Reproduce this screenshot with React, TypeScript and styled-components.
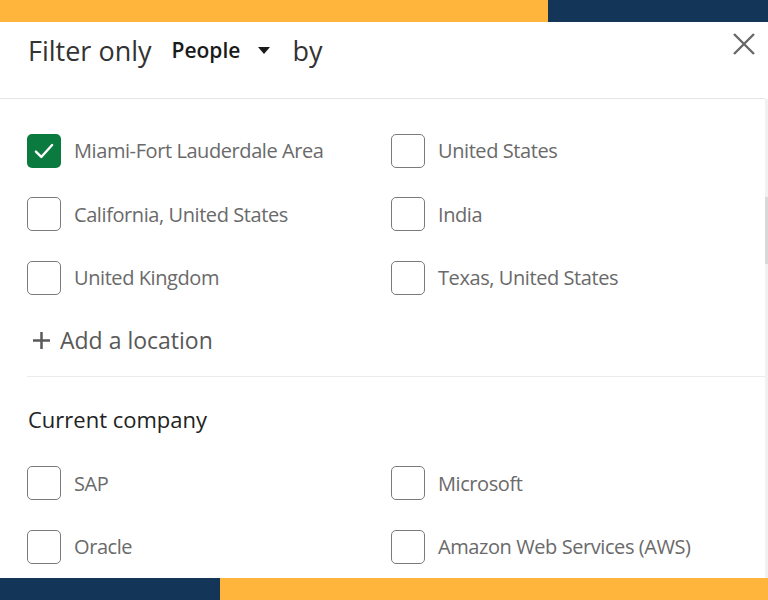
import * as React from "react"
import styled, { createGlobalStyle } from "styled-components"

const ORANGE = "#ffb43c"
const NAVY = "#133557"

const GlobalStyle = createGlobalStyle`
    html, body {
        margin: 0;
        padding: 0;
        background: #ffffff;
    }
    body {
        font-family: "Open Sans", "Noto Sans", sans-serif;
        overflow: hidden;
    }
`

const Page = styled.div`
    width: 768px;
    height: 600px;
    display: flex;
    flex-direction: column;
    background: #ffffff;
`

const Stripe = styled.div<{ $split: number; $left: string; $right: string }>`
    height: 22px;
    flex: 0 0 auto;
    display: grid;
    grid-template-columns: ${p => p.$split}px 1fr;
    background: ${p => p.$right};

    &::before {
        content: "";
        background: ${p => p.$left};
    }
`

const Header = styled.div`
    height: 77px;
    flex: 0 0 auto;
    display: flex;
    align-items: center;
    padding: 0 10px 0 28px;
    margin-right: 3px;
    border-bottom: 1px solid #e6e6e6;
    box-sizing: border-box;
    color: #333333;
`

const Title = styled.div`
    flex: 1 1 auto;
    display: flex;
    align-items: center;
    font-size: 27px;
    transform: translateY(-10px);
`

const EntityPicker = styled.span`
    display: inline-flex;
    align-items: center;
    gap: 18px;
    margin: 0 22px 0 20px;
    font-size: 21px;
    font-weight: 600;
    color: #1a1a1a;
`

const CloseButton = styled.button`
    border: none;
    background: none;
    padding: 0;
    width: 22px;
    height: 22px;
    display: flex;
    align-items: center;
    justify-content: center;
    cursor: pointer;
    transform: translateY(-16px);
`

const Body = styled.div`
    flex: 1 1 auto;
    display: flex;
    min-height: 0;
`

const Content = styled.div`
    flex: 1 1 auto;
    padding: 20px 0 0 27px;
    overflow: hidden;
`

const ScrollTrack = styled.div`
    flex: 0 0 3px;
    background: #f1f1f1;
    display: flex;
    flex-direction: column;
`

const ScrollThumb = styled.div`
    margin-top: 98px;
    height: 67px;
    background: #d9d9d9;
`

const OptionGrid = styled.div`
    display: grid;
    grid-template-columns: 364px 1fr;
    grid-auto-rows: 63.5px;
`

const Option = styled.label`
    display: flex;
    align-items: center;
    gap: 13px;
    font-size: 20px;
    letter-spacing: -0.42px;
    color: #6a6a6a;
    cursor: pointer;
`

const Box = styled.span<{ $checked: boolean }>`
    width: 34px;
    height: 34px;
    box-sizing: border-box;
    border-radius: 5px;
    border: ${p => (p.$checked ? "none" : "1.5px solid #7a7a7a")};
    background: ${p => (p.$checked ? "#0b7a3f" : "#ffffff")};
    display: flex;
    align-items: center;
    justify-content: center;
    flex: 0 0 auto;
`

const AddRow = styled.div`
    height: 61px;
    display: flex;
    align-items: center;
    gap: 10px;
    padding-left: 6px;
    font-size: 23px;
    font-weight: 500;
    color: #595959;
`

const Divider = styled.div`
    height: 1px;
    background: #ebebeb;
    margin-top: 5px;
`

const SectionTitle = styled.div`
    height: 75px;
    box-sizing: border-box;
    padding: 10px 0 0 1px;
    display: flex;
    align-items: center;
    font-size: 22px;
    font-weight: 500;
    color: #222222;
`

interface IOptionProps {
    text: string
    checked?: boolean
}

const CheckOption = ({ text, checked = false }: IOptionProps): JSX.Element => (
    <Option>
        <Box $checked={checked}>
            {checked ? (
                <svg width="26" height="26" viewBox="0 0 24 24" fill="none">
                    <path d="M4.5 12.5l5 5L19.5 6.5" stroke="#ffffff" strokeWidth="2.2" strokeLinecap="round" strokeLinejoin="round" />
                </svg>
            ) : null}
        </Box>
        {text}
    </Option>
)

const locations: IOptionProps[] = [
    { text: "Miami-Fort Lauderdale Area", checked: true },
    { text: "United States" },
    { text: "California, United States" },
    { text: "India" },
    { text: "United Kingdom" },
    { text: "Texas, United States" },
]

const companies: IOptionProps[] = [
    { text: "SAP" },
    { text: "Microsoft" },
    { text: "Oracle" },
    { text: "Amazon Web Services (AWS)" },
]

export default function App(): JSX.Element {
    return (
        <Page>
            <GlobalStyle />
            <Stripe $split={548} $left={ORANGE} $right={NAVY} />
            <Header>
                <Title>
                    Filter only
                    <EntityPicker>
                        People
                        <svg width="12" height="7" viewBox="0 0 12 7">
                            <path d="M0 0h12L6 7z" fill="#1a1a1a" />
                        </svg>
                    </EntityPicker>
                    by
                </Title>
                <CloseButton aria-label="Close">
                    <svg width="22" height="22" viewBox="0 0 22 22">
                        <path d="M1 1l20 20M21 1L1 21" stroke="#666666" strokeWidth="2.3" />
                    </svg>
                </CloseButton>
            </Header>
            <Body>
                <Content>
                    <OptionGrid>
                        {locations.map(o => (
                            <CheckOption key={o.text} {...o} />
                        ))}
                    </OptionGrid>
                    <AddRow>
                        <svg width="17" height="17" viewBox="0 0 17 17">
                            <path d="M8.5 0v17M0 8.5h17" stroke="#595959" strokeWidth="2.5" />
                        </svg>
                        Add a location
                    </AddRow>
                    <Divider />
                    <SectionTitle>Current company</SectionTitle>
                    <OptionGrid>
                        {companies.map(o => (
                            <CheckOption key={o.text} {...o} />
                        ))}
                    </OptionGrid>
                </Content>
                <ScrollTrack>
                    <ScrollThumb />
                </ScrollTrack>
            </Body>
            <Stripe $split={220} $left={NAVY} $right={ORANGE} />
        </Page>
    )
}
